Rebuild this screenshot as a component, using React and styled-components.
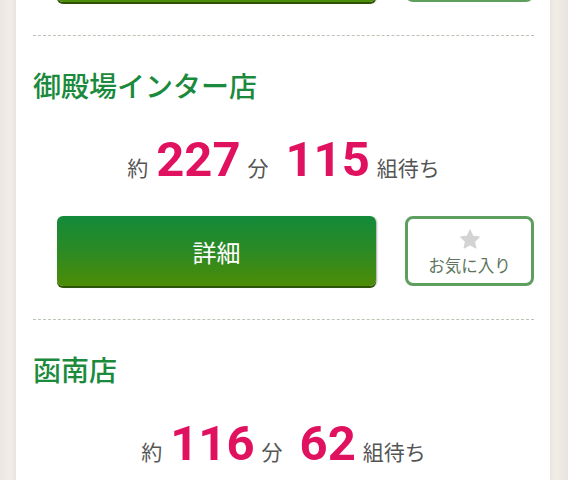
import React from 'react';
import styled, { createGlobalStyle } from 'styled-components';

const GlobalStyle = createGlobalStyle`
  html, body {
    margin: 0;
    padding: 0;
    background: #eeeae4;
    overflow: hidden;
    font-family: Roboto, "Noto Sans CJK JP", sans-serif;
  }
`;

const stores = [
  { name: '沼津店', minutes: 98, groups: 41 },
  { name: '御殿場インター店', minutes: 227, groups: 115 },
  { name: '函南店', minutes: 116, groups: 62 },
];

function Star() {
  return (
    <svg width="22" height="21" viewBox="0 0 24 23">
      <path
        d="M12 1.2l3.1 6.6 7.2.9-5.3 5 1.4 7.1L12 17.3l-6.4 3.5 1.4-7.1-5.3-5 7.2-.9z"
        fill="#d3d3d3"
        stroke="#d3d3d3"
        strokeWidth="1.2"
        strokeLinejoin="round"
      />
    </svg>
  );
}

function StoreSection({ store }) {
  return (
    <Section>
      <StoreName>{store.name}</StoreName>
      <WaitRow>
        <Unit>約</Unit>
        <Num>{store.minutes}</Num>
        <Unit $gap>分</Unit>
        <Num>{store.groups}</Num>
        <Unit>組待ち</Unit>
      </WaitRow>
      <ButtonRow>
        <DetailButton>詳細</DetailButton>
        <FavButton>
          <Star />
          <span>お気に入り</span>
        </FavButton>
      </ButtonRow>
    </Section>
  );
}

function App() {
  return (
    <>
      <GlobalStyle />
      <Page>
        <Card>
          {stores.map((s) => (
            <StoreSection key={s.name} store={s} />
          ))}
        </Card>
      </Page>
    </>
  );
}

// the list is scrolled: the first store only shows the bottom of its buttons
const Page = styled.div`
  padding: 0 18px 0 16px;
  margin-top: -249px;
  background: linear-gradient(to right, #ebe6df 0, #f4f1ec 16px, #f4f1ec calc(100% - 18px), #e9e4dd 100%);
`;

const Card = styled.div`
  background: #fff;
  padding: 0 16px 0 17px;
  box-shadow: 0 0 6px rgba(120, 100, 70, 0.18);
`;

const Section = styled.section`
  border-top: 1px dashed #b9c6b6;
  padding: 30px 0 33px;
  &:first-child {
    border-top-color: transparent;
  }
`;

const StoreName = styled.h2`
  margin: 0;
  font-family: "Noto Sans CJK JP", sans-serif;
  font-size: 28px;
  line-height: 39px;
  font-weight: 500;
  color: #1b8a3d;
`;

const WaitRow = styled.div`
  display: flex;
  justify-content: center;
  align-items: baseline;
  margin-top: 26px;
  height: 62px;
  color: #555;
`;

const Num = styled.span`
  font-family: Roboto, sans-serif;
  font-weight: 700;
  font-size: 49px;
  color: #e0125f;
  margin: 0 7px 0 8px;
`;

const Unit = styled.span`
  font-family: "Noto Sans CJK JP", sans-serif;
  font-size: 21px;
  color: #555;
  margin-right: ${(p) => (p.$gap ? '9px' : '0')};
`;

const ButtonRow = styled.div`
  display: flex;
  gap: 29px;
  margin-top: 23px;
  padding-left: 24px;
`;

const DetailButton = styled.button`
  flex: 1;
  height: 70px;
  border: none;
  border-radius: 6px;
  background: linear-gradient(to bottom, #128a3a 0%, #2c8a24 50%, #4d8c06 100%);
  box-shadow: 0 2px 0 #2e5206, 1px 1px 2px rgba(0, 0, 0, 0.35);
  color: #fff;
  font-family: "Noto Sans CJK JP", sans-serif;
  font-size: 24px;
  cursor: pointer;
`;

const FavButton = styled.button`
  width: 129px;
  height: 70px;
  box-sizing: border-box;
  border: 3px solid #5e9e5e;
  border-radius: 8px;
  background: #fff;
  display: flex;
  flex-direction: column;
  align-items: center;
  justify-content: center;
  gap: 3px;
  padding: 4px 0 0;
  font-family: "Noto Sans CJK JP", sans-serif;
  font-size: 16.5px;
  color: #5c755c;
  cursor: pointer;
`;

export default App;
